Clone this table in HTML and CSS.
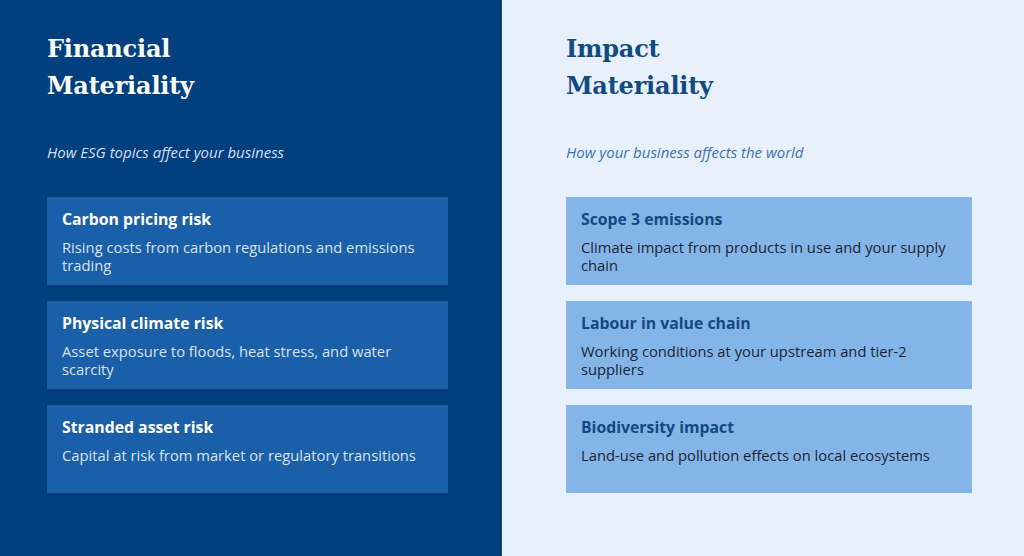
FILE: index.html
```html
<!DOCTYPE html>
<html lang="en">
<head>
<meta charset="utf-8">
<title>Materiality</title>
<link rel="stylesheet" href="styles.css">
</head>
<body>
<main class="split">
  <section class="panel panel-fin">
    <h2 class="title">Financial<br>Materiality</h2>
    <p class="subtitle">How ESG topics affect your business</p>
    <div class="cards">
      <div class="card">
        <h3 class="card-title">Carbon pricing risk</h3>
        <p class="card-text">Rising costs from carbon regulations and emissions trading</p>
      </div>
      <div class="card">
        <h3 class="card-title">Physical climate risk</h3>
        <p class="card-text">Asset exposure to floods, heat stress, and water scarcity</p>
      </div>
      <div class="card">
        <h3 class="card-title">Stranded asset risk</h3>
        <p class="card-text">Capital at risk from market or regulatory transitions</p>
      </div>
    </div>
  </section>
  <section class="panel panel-imp">
    <h2 class="title">Impact<br>Materiality</h2>
    <p class="subtitle">How your business affects the world</p>
    <div class="cards">
      <div class="card">
        <h3 class="card-title">Scope 3 emissions</h3>
        <p class="card-text">Climate impact from products in use and your supply chain</p>
      </div>
      <div class="card">
        <h3 class="card-title">Labour in value chain</h3>
        <p class="card-text">Working conditions at your upstream and tier-2 suppliers</p>
      </div>
      <div class="card">
        <h3 class="card-title">Biodiversity impact</h3>
        <p class="card-text">Land-use and pollution effects on local ecosystems</p>
      </div>
    </div>
  </section>
</main>
</body>
</html>
```
FILE: styles.css
```css
* { box-sizing: border-box; }
html, body { margin: 0; padding: 0; }
body {
  width: 1024px;
  height: 556px;
  overflow: hidden;
  font-family: "Open Sans", "Noto Sans", sans-serif;
}
.split {
  display: grid;
  grid-template-columns: 502px 522px;
  height: 556px;
}
.panel {
  padding-top: 30px;
}
.panel-fin {
  background: #013f7e;
  padding-left: 47px;
  padding-right: 53px;
  border-right: 1px solid #0b4a8a;
}
.panel-imp {
  background: #e8f1fb;
  padding-left: 64px;
  padding-right: 52px;
}
.title {
  margin: 0;
  font-family: "DejaVu Serif", "Liberation Serif", serif;
  font-weight: bold;
  font-size: 24px;
  line-height: 37px;
  letter-spacing: -0.2px;
}
.panel-fin .title { color: #ffffff; }
.panel-imp .title { color: #124a84; }
.subtitle {
  margin: 38px 0 0;
  font-style: italic;
  font-size: 15px;
  line-height: 20px;
}
.panel-fin .subtitle { color: #d3dff0; }
.panel-imp .subtitle { color: #3a72b6; }
.cards {
  margin-top: 35px;
  display: flex;
  flex-direction: column;
  gap: 16px;
}
.card {
  height: 88px;
  padding: 12px 15px 0;
}
.panel-fin .card { background: #1a5fa7; }
.panel-imp .card { background: #84b5e8; }
.card-title {
  margin: 0;
  font-size: 15.8px;
  font-weight: bold;
  line-height: 20px;
}
.card-text {
  margin: 10px 0 0;
  font-size: 14.75px;
  line-height: 17.5px;
}
.panel-fin .card-title { color: #ffffff; }
.panel-fin .card-text { color: #d8e3f2; }
.panel-imp .card-title { color: #124a84; }
.panel-imp .card-text { color: #1c2430; }
```
